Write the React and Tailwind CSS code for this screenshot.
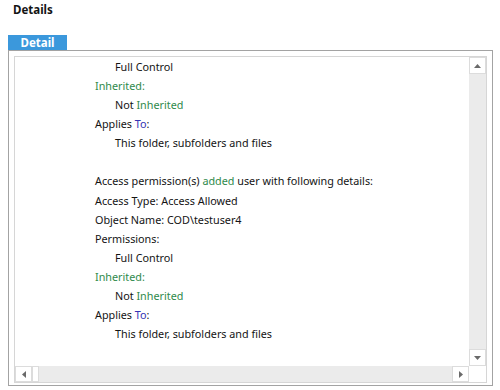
import React from "react";

const G = ({ children }) => <span className="text-[#2f8a4c]">{children}</span>;
const B = ({ children }) => <span className="text-[#3434b4]">{children}</span>;

const lines = [
  [1, <>Full Control</>],
  [0, <G>Inherited:</G>],
  [1, <>Not <G>Inherited</G></>],
  [0, <>Applies <B>To</B>:</>],
  [1, <>This folder, subfolders and files</>],
  [0, <>&nbsp;</>],
  [0, <>Access permission(s) <G>added</G> user with following details:</>],
  [0, <>Access Type: Access Allowed</>],
  [0, <>Object Name: COD\testuser4</>],
  [0, <>Permissions:</>],
  [1, <>Full Control</>],
  [0, <G>Inherited:</G>],
  [1, <>Not <G>Inherited</G></>],
  [0, <>Applies <B>To</B>:</>],
  [1, <>This folder, subfolders and files</>],
];

const Tri = ({ dir }) => {
  const pts = {
    up: "0,4 3.5,0 7,4",
    down: "0,0 7,0 3.5,4",
    left: "4,0 4,7 0,3.5",
    right: "0,0 0,7 4,3.5",
  }[dir];
  const w = dir === "up" || dir === "down" ? 7 : 4;
  const h = dir === "up" || dir === "down" ? 4 : 7;
  return (
    <svg width={w} height={h} viewBox={`0 0 ${w} ${h}`}>
      <polygon points={pts} fill="#6a6a6a" />
    </svg>
  );
};

export default function App() {
  return (
    <div
      className="w-[500px] h-[390px] bg-white relative overflow-hidden text-[#141414]"
      style={{ fontFamily: '"Noto Sans", "Open Sans", sans-serif' }}
    >
      <div className="pl-[13px] pt-[1px] h-[35px] text-[11.5px] font-bold leading-[18px]">Details</div>
      <div className="ml-[8px] w-[59px] h-[15px] bg-[#3b98dc] text-white text-[11.5px] font-bold leading-[15px] flex justify-center">
        Detail
      </div>
      <div className="ml-[8px] w-[485px] h-[336px] border border-[#a3a3a3] p-[5px] pb-[3px] pr-[5px]">
        <div className="w-[473px] h-[327px] border border-[#d6d6d6] flex flex-col">
          <div className="flex flex-1 min-h-0">
            <div className="flex-1 overflow-hidden text-[10.8px] leading-[19.08px] pl-[80px] pt-0 whitespace-nowrap">
              {lines.map(([ind, c], i) => (
                <div key={i} className={ind ? "pl-[20px]" : ""}>
                  {c}
                </div>
              ))}
            </div>
            <div className="w-[17px] bg-[#ebebeb] flex flex-col justify-between">
              <div className="h-[17px] bg-white border border-[#dcdcdc] flex items-center justify-center">
                <Tri dir="up" />
              </div>
              <div className="h-[17px] bg-white border border-[#dcdcdc] flex items-center justify-center">
                <Tri dir="down" />
              </div>
            </div>
          </div>
          <div className="h-[16px] flex">
            <div className="flex-1 bg-[#ebebeb] flex">
              <div className="w-[17px] bg-white border border-[#dcdcdc] flex items-center justify-center">
                <Tri dir="left" />
              </div>
              <div className="w-[7px] bg-white border border-[#dcdcdc]" />
              <div className="flex-1" />
              <div className="w-[17px] bg-white border border-[#dcdcdc] flex items-center justify-center">
                <Tri dir="right" />
              </div>
            </div>
            <div className="w-[17px] bg-white" />
          </div>
        </div>
      </div>
    </div>
  );
}
